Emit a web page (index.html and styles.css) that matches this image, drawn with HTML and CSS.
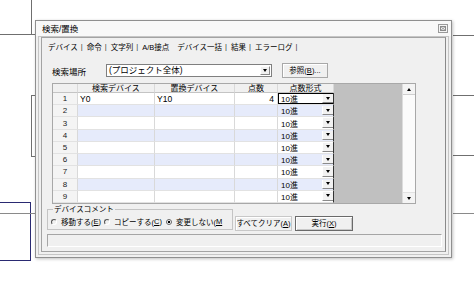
FILE: index.html
```html
<!DOCTYPE html>
<html lang="ja">
<head>
  <meta charset="UTF-8">
  <title>検索/置換</title>
  <link rel="stylesheet" href="styles.css">
</head>
<body>
  <!-- window edges lying behind the dialog -->
  <div class="backdrop">
    <div class="bl bl-v1"></div>
    <div class="bl bl-h1"></div>
    <div class="bl-bracket"></div>
    <div class="bl-navy"></div>
    <div class="bl bl-h2"></div>
    <div class="bl bl-r1"></div>
    <div class="bl bl-r2"></div>
    <div class="bl bl-r3"></div>
    <div class="bl bl-r4"></div>
  </div>

  <div class="dialog">
    <div class="titlebar">
      <span class="title">検索/置換</span>
      <span class="close">
        <svg width="10" height="9" viewBox="0 0 10 9">
          <rect x="0.5" y="0.5" width="9" height="8" fill="#f4f4f4" stroke="#9a9a9a"/>
          <rect x="2.5" y="2.5" width="5" height="4" fill="none" stroke="#8a8a8a"/>
          <path d="M2.5 2.5 L7.5 6.5 M7.5 2.5 L2.5 6.5" stroke="#8a8a8a" stroke-width="0.8"/>
        </svg>
      </span>
    </div>
    <div class="client">
      <div class="page">
        <div class="tabs">
          <span class="tab">デバイス</span><span class="sep">|</span>
          <span class="tab">命令</span><span class="sep">|</span>
          <span class="tab">文字列</span><span class="sep">|</span>
          <span class="tab">A/B接点</span>
          <span class="tab active">デバイス一括</span><span class="sep">|</span>
          <span class="tab">結果</span><span class="sep">|</span>
          <span class="tab">エラーログ</span><span class="sep">|</span>
        </div>

        <div class="where-row">
          <span class="where-label">検索場所</span>
          <div class="combo">
            <span class="combo-text">(プロジェクト全体)</span>
            <span class="drop"><i class="tri-down"></i></span>
          </div>
          <button class="btn btn-ref">参照(<u>B</u>)...</button>
        </div>

        <div class="grid-wrap">
          <div class="grid">
            <div class="row head">
              <div class="gh"></div>
              <div class="gh">検索デバイス</div>
              <div class="gh">置換デバイス</div>
              <div class="gh">点数</div>
              <div class="gh">点数形式</div>
            </div>
            <div class="row">
              <div class="rn">1</div>
              <div class="gc">Y0</div>
              <div class="gc">Y10</div>
              <div class="gc num">4</div>
              <div class="gc fmt focus"><span>10進</span><span class="dd"><i class="tri-down"></i></span></div>
            </div>
            <div class="row alt">
              <div class="rn">2</div><div class="gc"></div><div class="gc"></div><div class="gc"></div>
              <div class="gc fmt"><span>10進</span><span class="dd"><i class="tri-down"></i></span></div>
            </div>
            <div class="row">
              <div class="rn">3</div><div class="gc"></div><div class="gc"></div><div class="gc"></div>
              <div class="gc fmt"><span>10進</span><span class="dd"><i class="tri-down"></i></span></div>
            </div>
            <div class="row alt">
              <div class="rn">4</div><div class="gc"></div><div class="gc"></div><div class="gc"></div>
              <div class="gc fmt"><span>10進</span><span class="dd"><i class="tri-down"></i></span></div>
            </div>
            <div class="row">
              <div class="rn">5</div><div class="gc"></div><div class="gc"></div><div class="gc"></div>
              <div class="gc fmt"><span>10進</span><span class="dd"><i class="tri-down"></i></span></div>
            </div>
            <div class="row alt">
              <div class="rn">6</div><div class="gc"></div><div class="gc"></div><div class="gc"></div>
              <div class="gc fmt"><span>10進</span><span class="dd"><i class="tri-down"></i></span></div>
            </div>
            <div class="row">
              <div class="rn">7</div><div class="gc"></div><div class="gc"></div><div class="gc"></div>
              <div class="gc fmt"><span>10進</span><span class="dd"><i class="tri-down"></i></span></div>
            </div>
            <div class="row alt">
              <div class="rn">8</div><div class="gc"></div><div class="gc"></div><div class="gc"></div>
              <div class="gc fmt"><span>10進</span><span class="dd"><i class="tri-down"></i></span></div>
            </div>
            <div class="row">
              <div class="rn">9</div><div class="gc"></div><div class="gc"></div><div class="gc"></div>
              <div class="gc fmt"><span>10進</span><span class="dd"><i class="tri-down"></i></span></div>
            </div>
          </div>
          <div class="filler"></div>
          <div class="vscroll">
            <span class="sb-btn"><i class="tri-up"></i></span>
            <span class="sb-track"></span>
            <span class="sb-btn"><i class="tri-down"></i></span>
          </div>
        </div>

        <div class="bottom-row">
          <fieldset class="group">
            <legend>デバイスコメント</legend>
            <label class="radio"><i class="dot"></i>移動する(<u>E</u>)</label>
            <label class="radio"><i class="dot"></i>コピーする(<u>C</u>)</label>
            <label class="radio checked"><i class="dot"></i>変更しない(<u>M</u></label>
          </fieldset>
          <button class="btn btn-clear">すべてクリア(<u>A</u>)</button>
          <button class="btn btn-run">実行(<u>X</u>)</button>
        </div>

        <div class="status"></div>
      </div>
    </div>
  </div>
</body>
</html>
```

FILE: styles.css
```css
body {
  margin: 0;
  width: 474px;
  height: 293px;
  overflow: hidden;
  position: relative;
  background: #fff;
  font-family: 'Liberation Sans', 'Noto Sans CJK JP', sans-serif;
  font-size: 8px;
  color: #000;
}
/* background window lines */
.backdrop {
  position: absolute;
  top: 0; left: 0;
  width: 474px; height: 293px;
}
.bl {
  position: absolute;
  background: #6f6f6f;
}
.bl-v1 { left: 31px; top: 0; width: 1px; height: 35px; }
.bl-h1 { left: 0; top: 34px; width: 35px; height: 1px; }
.bl-bracket {
  position: absolute;
  left: 31px; top: 95px;
  width: 4px; height: 60px;
  border: 1px solid #6f6f6f;
  border-right: none;
}
.bl-navy {
  position: absolute;
  left: -1px; top: 202px;
  width: 30px; height: 57px;
  border: 1px solid #2a2a72;
}
.bl-h2 { left: 0; top: 213px; width: 36px; height: 1px; background: #8a8a8a; }
.bl-r1 { left: 453px; top: 35px; width: 21px; height: 1px; }
.bl-r2 { left: 453px; top: 95px; width: 21px; height: 1px; }
.bl-r3 { left: 453px; top: 155px; width: 21px; height: 1px; }
.bl-r4 { left: 453px; top: 213px; width: 21px; height: 1px; background: #8a8a8a; }

/* dialog */
.dialog {
  position: relative;
  margin: 20px 0 0 35px;
  width: 417px;
  height: 238px;
  box-sizing: border-box;
  border: 1px solid #8f8f8f;
  background: #f0f0f0;
  box-shadow: 1px 1px 3px rgba(0,0,0,0.25);
  display: flex;
  flex-direction: column;
}
.titlebar {
  height: 15px;
  flex: none;
  display: flex;
  align-items: center;
  justify-content: space-between;
  padding: 0 3px 0 6px;
  background: #f8f8f8;
}
.title {
  font-size: 8.5px;
  line-height: 10px;
}
.close svg {
  display: block;
}
.client {
  flex: 1;
  margin: 0 2px 2px 2px;
  border: 1px solid #c6c6c6;
  display: flex;
  flex-direction: column;
}
.page {
  flex: 1;
  margin: 0 2px 2px 2px;
  border: 1px solid #a3a3a3;
  border-right-color: #8a8a8a;
  display: flex;
  flex-direction: column;
}
.tabs {
  height: 17px;
  flex: none;
  display: flex;
  align-items: center;
  padding-left: 3px;
  font-size: 7.5px;
  white-space: nowrap;
}
.tab {
  padding: 0 2px 0 3px;
}
.tab.active {
  padding: 0 2px 0 6px;
}
.sep {
  color: #333;
  padding: 0 1px;
}
.where-row {
  flex: none;
  display: flex;
  align-items: center;
  height: 15px;
  margin-top: 8px;
  padding-left: 10px;
}
.where-label {
  width: 54px;
  font-size: 8.5px;
}
.combo {
  width: 166px;
  height: 13px;
  box-sizing: border-box;
  border: 1px solid #7f7f7f;
  background: #fff;
  display: flex;
  align-items: center;
  justify-content: space-between;
}
.combo-text {
  padding-left: 2px;
  font-size: 8.5px;
  line-height: 11px;
}
.drop {
  width: 10px;
  height: 9px;
  margin-right: 1px;
  background: #f0f0f0;
  border: 1px solid #fff;
  border-right-color: #888;
  border-bottom-color: #888;
  display: flex;
  align-items: center;
  justify-content: center;
  box-sizing: border-box;
}
.tri-down {
  display: block;
  width: 0; height: 0;
  border-left: 2.5px solid transparent;
  border-right: 2.5px solid transparent;
  border-top: 3px solid #000;
}
.tri-up {
  display: block;
  width: 0; height: 0;
  border-left: 2.5px solid transparent;
  border-right: 2.5px solid transparent;
  border-bottom: 3px solid #000;
}
.btn {
  font-family: inherit;
  font-size: 7.5px;
  line-height: 10px;
  padding: 0;
  color: #000;
  background: #f0f0f0;
  border: 1px solid #a8a8a8;
  box-shadow: inset 1px 1px 0 #fff;
  white-space: nowrap;
}
.btn-ref {
  width: 46px;
  height: 15px;
  margin-left: 10px;
}

/* device grid */
.grid-wrap {
  flex: none;
  display: flex;
  width: 364px;
  height: 121px;
  box-sizing: border-box;
  margin: 5px 0 0 10px;
  border: 1px solid #a8a8a8;
}
.grid {
  display: grid;
  grid-template-columns: 25px 77px 80px 43px 56px;
  grid-template-rows: 9px repeat(9, 1fr);
  background: #fff;
}
.row {
  display: contents;
}
.gh, .rn, .gc {
  box-sizing: border-box;
  border-right: 1px solid #d9d9d9;
  border-bottom: 1px solid #e2e2e2;
  display: flex;
  align-items: center;
  white-space: nowrap;
  overflow: hidden;
}
.gh {
  background: #f0f0f0;
  border-bottom-color: #c4c4c4;
  justify-content: center;
  font-size: 8px;
  line-height: 9px;
}
.rn {
  background: #f4f4f4;
  justify-content: center;
  font-size: 8px;
  color: #222;
}
.gc {
  padding-left: 2px;
  font-size: 8.5px;
}
.row.alt .gc {
  background: #e6ebfb;
}
.gc.num {
  justify-content: flex-end;
  padding-right: 3px;
}
.gc.fmt {
  padding-left: 3px;
  padding-right: 0;
  justify-content: space-between;
  border-right-color: #333;
  font-size: 8px;
}
.gc.focus {
  box-shadow: inset 0 0 0 1px #000;
}
.dd {
  width: 11px;
  align-self: stretch;
  margin: 1px 0;
  background: #f2f2f2;
  border-left: 1px solid #fff;
  border-bottom: 1px solid #8a8a8a;
  display: flex;
  align-items: center;
  justify-content: center;
  box-sizing: border-box;
}
.filler {
  width: 68px;
  background: #c0c0c0;
}
.vscroll {
  width: 12px;
  background: #fbfbfb;
  border-left: 1px solid #dcdcdc;
  display: flex;
  flex-direction: column;
}
.sb-btn {
  height: 10px;
  display: flex;
  align-items: center;
  justify-content: center;
  background: #f4f4f4;
  border-bottom: 1px solid #cfcfcf;
}
.sb-btn:last-child {
  border-bottom: none;
  border-top: 1px solid #e2e2e2;
}
.sb-track {
  flex: 1;
}

/* comment group and actions */
.bottom-row {
  flex: none;
  height: 28px;
  display: flex;
  align-items: flex-start;
}
.group {
  width: 186px;
  height: 25px;
  box-sizing: border-box;
  margin: 1px 0 0 5px;
  padding: 0 1px 0 3px;
  border: 1px solid #c4c4c4;
  display: flex;
  align-items: center;
  white-space: nowrap;
  min-width: 0;
}
.group legend {
  padding: 0 1px;
  margin-left: 2px;
  font-size: 7.5px;
  line-height: 9px;
}
.radio {
  display: flex;
  align-items: center;
  font-size: 7.5px;
  margin-right: 3px;
}
.radio:last-child {
  margin-right: 0;
}
.dot {
  width: 6px;
  height: 6px;
  box-sizing: border-box;
  border-radius: 50%;
  border: 1px solid #fff;
  border-top-color: #555;
  border-left-color: #555;
  margin-right: 4px;
  flex: none;
}
.radio.checked .dot {
  background: radial-gradient(circle, #000 0 1.3px, #fff 1.6px);
  border-color: #666;
  margin-left: 1px;
}
.btn-clear {
  width: 57px;
  height: 15px;
  margin: 12px 0 0 2px;
  border-color: #c8c8c8;
}
.btn-run {
  width: 58px;
  height: 15px;
  margin: 12px 0 0 3px;
  border-color: #6a6a6a;
  box-shadow: inset 1px 1px 0 #fff, inset -1px -1px 0 #c8c8c8;
}
.status {
  flex: none;
  height: 13px;
  margin: 2px 3px 0 5px;
  box-sizing: border-box;
  border: 1px solid;
  border-color: #a5a5a5 #fff #fff #a5a5a5;
}
```
